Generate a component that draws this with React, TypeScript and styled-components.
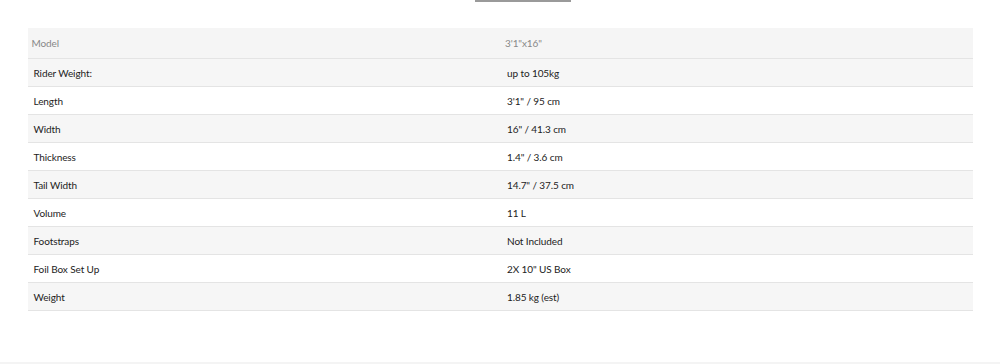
import React from 'react';
import styled, { createGlobalStyle } from 'styled-components';

type Spec = {
  label: string;
  value: string;
};

const specs: Spec[] = [
  { label: 'Rider Weight:', value: 'up to 105kg' },
  { label: 'Length', value: '3\'1" / 95 cm' },
  { label: 'Width', value: '16" / 41.3 cm' },
  { label: 'Thickness', value: '1.4" / 3.6 cm' },
  { label: 'Tail Width', value: '14.7" / 37.5 cm' },
  { label: 'Volume', value: '11 L' },
  { label: 'Footstraps', value: 'Not Included' },
  { label: 'Foil Box Set Up', value: '2X 10" US Box' },
  { label: 'Weight', value: '1.85 kg (est)' },
];

const GlobalStyle = createGlobalStyle`
  html, body {
    margin: 0;
    padding: 0;
    background: #ffffff;
    font-family: Lato, "Open Sans", Arial, sans-serif;
  }
`;

const Page = styled.div`
  width: 1000px;
  height: 364px;
  display: flex;
  flex-direction: column;
  align-items: center;
  border-bottom: 2px solid #f4f4f4;
  box-sizing: border-box;
`;

const TabMarker = styled.div`
  width: 96px;
  height: 2px;
  margin-left: 45px;
  background: #9a9a9a;
`;

const Table = styled.table`
  width: 945px;
  margin-top: 26px;
  border-collapse: collapse;
  table-layout: fixed;
  font-size: 10px;
  letter-spacing: -0.1px;
  color: #222;
`;

const HeadCell = styled.th<{ $value?: boolean }>`
  text-align: left;
  font-weight: 400;
  color: #888;
  background: #f5f5f5;
  height: 30px;
  padding: 0 0 0 ${(p) => (p.$value ? '5px' : '4px')};
  border-bottom: 1px solid #e4e4e4;
`;

const Row = styled.tr<{ $shaded: boolean }>`
  background: ${(p) => (p.$shaded ? '#f6f6f6' : '#ffffff')};
`;

const Cell = styled.td<{ $value?: boolean }>`
  height: 27px;
  padding: 0 0 0 ${(p) => (p.$value ? '7px' : '6px')};
  border-bottom: 1px solid #e4e4e4;
`;

const App = () => {
  return (
    <>
      <GlobalStyle />
      <Page>
        <TabMarker />
        <Table>
          <thead>
            <tr>
              <HeadCell>Model</HeadCell>
              <HeadCell $value>3'1"x16"</HeadCell>
            </tr>
          </thead>
          <tbody>
            {specs.map((spec, i) => (
              <Row key={spec.label} $shaded={i % 2 === 0}>
                <Cell>{spec.label}</Cell>
                <Cell $value>{spec.value}</Cell>
              </Row>
            ))}
          </tbody>
        </Table>
      </Page>
    </>
  );
};

export default App;
